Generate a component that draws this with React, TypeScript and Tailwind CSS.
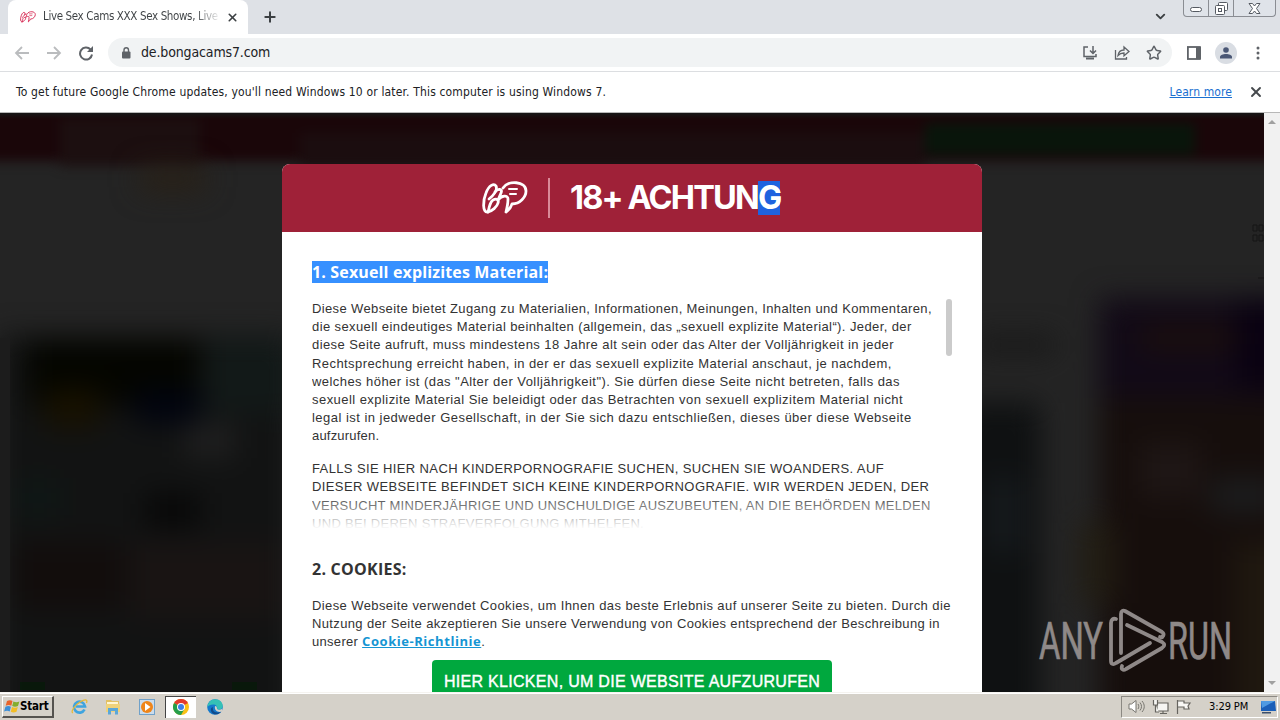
import { ChevronDown, Plus, Star, X } from "lucide-react";

const introLines = [
  { text: "Diese Webseite bietet Zugang zu Materialien, Informationen, Meinungen, Inhalten und Kommentaren,", cls: "tracking-[0.37px]" },
  { text: "die sexuell eindeutiges Material beinhalten (allgemein, das „sexuell explizite Material“). Jeder, der", cls: "tracking-[0.4px]" },
  { text: "diese Seite aufruft, muss mindestens 18 Jahre alt sein oder das Alter der Volljährigkeit in jeder", cls: "tracking-[0.42px]" },
  { text: "Rechtsprechung erreicht haben, in der er das sexuell explizite Material anschaut, je nachdem,", cls: "tracking-[0.43px]" },
  { text: "welches höher ist (das \"Alter der Volljährigkeit\"). Sie dürfen diese Seite nicht betreten, falls das", cls: "tracking-[0.44px]" },
  { text: "sexuell explizite Material Sie beleidigt oder das Betrachten von sexuell explizitem Material nicht", cls: "tracking-[0.45px]" },
  { text: "legal ist in jedweder Gesellschaft, in der Sie sich dazu entschließen, dieses über diese Webseite", cls: "tracking-[0.47px]" },
  { text: "aufzurufen.", cls: "tracking-[0.2px]" },
];

const warningLines = [
  { text: "FALLS SIE HIER NACH KINDERPORNOGRAFIE SUCHEN, SUCHEN SIE WOANDERS. AUF", cls: "tracking-[0.38px]" },
  { text: "DIESER WEBSEITE BEFINDET SICH KEINE KINDERPORNOGRAFIE. WIR WERDEN JEDEN, DER", cls: "tracking-[0.39px]" },
  { text: "VERSUCHT MINDERJÄHRIGE UND UNSCHULDIGE AUSZUBEUTEN, AN DIE BEHÖRDEN MELDEN", cls: "tracking-[0.29px]" },
  { text: "UND BEI DEREN STRAFVERFOLGUNG MITHELFEN.", cls: "tracking-[0.3px]" },
];

function BrandMark({ className }: { className: string }) {
  return (
    <svg className={className} viewBox="0 0 46 34" fill="none" stroke="currentColor" strokeWidth="2.8" strokeLinecap="round" strokeLinejoin="round">
      <path d="M6 31C0 32 1 19 4 12 7 4 12 2 14 5c2 4-3 10-7 13" />
      <path d="M6 31c2-6 1-9 5-12 4-2 6 0 5 3-1 4-6 8-10 9" />
      <path d="M13 11c3-4 8-3 6 1l-3 7c4-5 10-5 10-1 0 3-1 9-2 13 3-2 5-5 6-8 8 0 14-7 14-13C44 0 26-1 21 7" />
      <path d="M27 8h8M28 13h6" strokeWidth="2" />
    </svg>
  );
}

function TabStrip() {
  return (
    <div className="flex h-[34px] items-stretch bg-[#dee1e6]">
      <div className="ml-2 flex w-[240px] items-center rounded-t-lg bg-white pl-3">
        <BrandMark className="h-3 w-4 text-[#d8325a]" />
        <div className="ml-[7px] w-[178px] overflow-hidden bg-gradient-to-r from-[#3c4043] from-85% to-[#3c404300] bg-clip-text text-[11.5px] whitespace-nowrap text-transparent tracking-[-0.36px]">
          Live Sex Cams XXX Sex Shows, Live
        </div>
        <X className="ml-[5px] size-[13px] text-[#3c4043]" strokeWidth={3} />
      </div>
      <Plus className="mt-[9px] ml-[14px] size-4 text-[#3c4043]" strokeWidth={3} />
      <div className="ml-auto flex">
        <ChevronDown className="mt-[9px] mr-[15px] size-[15px] text-[#3c4043]" strokeWidth={3} />
        <div className="mr-1 flex h-[17px] w-[93px] rounded-b border border-t-0 border-[#8a8d93] bg-[#dfe3e9]">
          <div className="flex w-[25px] items-center justify-center border-r border-[#8a8d93]">
            <div className="mt-[3px] h-[5px] w-3 rounded-sm border border-[#555a62] bg-white" />
          </div>
          <div className="flex w-[25px] items-center justify-center border-r border-[#8a8d93]">
            <svg className="size-[13px]" viewBox="0 0 13 13" fill="white" stroke="#555a62">
              <rect x="3.500" y="0.500" width="9" height="8" rx="1" />
              <rect x="0.500" y="3.500" width="9" height="9" rx="1" />
              <rect x="3.500" y="6.500" width="3" height="3" />
            </svg>
          </div>
          <div className="flex flex-1 items-center justify-center">
            <svg className="h-[11px] w-[13px]" viewBox="0 0 13 11" fill="white" stroke="#555a62" strokeLinejoin="round">
              <path d="M1 .5h3.500l2 2.500 2-2.500H12L8.500 5.500 12 10.500H8.500l-2-2.500-2 2.500H1l3.500-5z" />
            </svg>
          </div>
        </div>
      </div>
    </div>
  );
}

function Toolbar() {
  return (
    <div className="flex h-[38px] items-center border-b border-[#dcdee1] bg-white">
      <svg className="ml-[14px] h-4 w-[84px]" viewBox="0 0 84 16" fill="none" strokeWidth="1.8">
        <path d="M15 8H2M8 2L2 8l6 6" stroke="#babcbe" />
        <path d="M33 8h13M40 2l6 6-6 6" stroke="#babcbe" />
        <path d="M76.500 4.500A6 6 0 1 0 78 9.500" stroke="#5f6368" strokeWidth="2" />
        <path d="M79 1v6h-6z" fill="#5f6368" />
      </svg>
      <div className="ml-[10px] flex h-[29px] w-[1064px] items-center rounded-full bg-[#f1f3f4] pr-[10px] pl-[13px]">
        <svg className="size-3" viewBox="0 0 12 12" fill="#5f6368">
          <rect x="1" y="4.500" width="8.500" height="7" rx="1" />
          <path d="M3 5V3a2.250 2.250 0 0 1 4.500 0v2" fill="none" stroke="#5f6368" strokeWidth="1.400" />
        </svg>
        <span className="ml-2 text-[14px] tracking-[-0.14px] text-[#202124]">de.bongacams7.com</span>
        <div className="ml-auto flex items-center gap-4 text-[#5f6368]">
          <svg className="size-4" viewBox="0 0 16 16" fill="none" stroke="currentColor" strokeWidth="1.5">
            <path d="M6 2H2v9.500h12V9M11 1v7M8 5.500l3 3 3-3" />
            <path d="M4 13.500h8" strokeWidth="2" />
          </svg>
          <svg className="size-4" viewBox="0 0 16 16" fill="none" stroke="currentColor" strokeWidth="1.3">
            <path d="M1.500 5v9h11v-2M4 10.500C4.500 7 7 5 10 5V2l5 4.500-5 4.300V8C7.500 8 5.500 8.800 4 10.500z" />
          </svg>
          <Star className="size-4" strokeWidth={2.2} />
        </div>
      </div>
      <svg className="ml-[15px] size-[14px]" viewBox="0 0 14 14">
        <rect x="0.900" y="1" width="12" height="12" fill="none" stroke="#5f6368" strokeWidth="1.800" />
        <rect x="9" y="1" width="5" height="12" fill="#5f6368" />
      </svg>
      <div className="ml-[14px] flex size-[22px] items-center justify-center rounded-full bg-[#d9dde3]">
        <svg className="size-3" viewBox="0 0 12 12" fill="#4a5775">
          <circle cx="6" cy="3" r="2.800" />
          <path d="M0 11.500V10c0-2 3-3 6-3s6 1 6 3v1.500z" />
        </svg>
      </div>
      <svg className="ml-[19px] h-[14px] w-1" viewBox="0 0 4 14" fill="#5f6368">
        <circle cx="2" cy="2" r="1.500" />
        <circle cx="2" cy="7" r="1.500" />
        <circle cx="2" cy="12" r="1.500" />
      </svg>
    </div>
  );
}

function InfoBar() {
  return (
    <div className="flex h-[41px] items-center border-b border-[#b8b8b8] bg-white pr-4 pl-4 text-[12px] text-[#202124]">
      <span className="tracking-[0.16px] whitespace-nowrap">
        To get future Google Chrome updates, you'll need Windows 10 or later. This computer is using Windows 7.
      </span>
      <span className="ml-auto tracking-[0.1px] text-[#1a6fd0] underline">Learn more</span>
      <X className="ml-4 size-4 text-[#45494d]" strokeWidth={2.8} />
    </div>
  );
}

// Dimmed, blurred site behind the age gate
function Backdrop() {
  return (
    <svg className="absolute inset-0 h-full w-full" viewBox="0 0 1264 579" preserveAspectRatio="none">
      <defs>
        <filter id="soft" filterUnits="userSpaceOnUse" x="-60" y="-60" width="1400" height="720" colorInterpolationFilters="sRGB">
          <feGaussianBlur stdDeviation="14" />
        </filter>
        <filter id="edge" filterUnits="userSpaceOnUse" x="-60" y="-60" width="1400" height="180" colorInterpolationFilters="sRGB">
          <feGaussianBlur stdDeviation="6" />
        </filter>
        <linearGradient id="topshade" x1="0" y1="0" x2="0" y2="1">
          <stop offset="0" stopColor="#161616" />
          <stop offset="1" stopColor="#161616" stopOpacity="0" />
        </linearGradient>
      </defs>
      <rect width="1264" height="579" fill="#242424" />
      <g filter="url(#edge)">
        <rect x="-50" y="-50" width="1364" height="98" fill="#1a0609" />
        <rect x="60" y="5" width="140" height="48" fill="#1c0f10" />
        <rect x="300" y="20" width="625" height="35" fill="#1b0d0f" />
        <rect x="925" y="10" width="270" height="32" fill="#09150b" />
      </g>
      <g filter="url(#soft)">
        <rect x="140" y="55" width="65" height="22" fill="#292015" />
        <rect x="0" y="222" width="290" height="400" fill="#121313" />
        <rect x="28" y="228" width="170" height="65" fill="#040500" />
        <rect x="45" y="275" width="55" height="40" fill="#171100" />
        <rect x="135" y="275" width="65" height="35" fill="#01040f" />
        <rect x="205" y="225" width="90" height="75" fill="#121918" />
        <rect x="185" y="310" width="50" height="35" fill="#1f1f1f" />
        <rect x="15" y="365" width="45" height="40" fill="#0f1715" />
        <rect x="145" y="380" width="55" height="35" fill="#080808" />
        <rect x="15" y="430" width="110" height="65" fill="#120d0c" />
        <rect x="130" y="430" width="150" height="75" fill="#191413" />
        <rect x="975" y="223" width="80" height="18" fill="#181818" />
        <rect x="960" y="290" width="80" height="330" fill="#0f1112" />
        <rect x="985" y="365" width="38" height="75" fill="#15191c" />
        <rect x="1100" y="185" width="220" height="440" fill="#160e0c" />
        <rect x="1100" y="185" width="200" height="100" fill="#120a17" />
        <rect x="1142" y="215" width="100" height="20" fill="#1c0f0b" />
        <rect x="1235" y="185" width="70" height="90" fill="#0a0212" />
        <rect x="1140" y="330" width="60" height="55" fill="#1e1615" />
        <rect x="1210" y="365" width="70" height="35" fill="#1b1c1d" />
        <rect x="1080" y="410" width="35" height="80" fill="#221d13" />
        <rect x="1235" y="430" width="70" height="180" fill="#1f180f" />
      </g>
      <rect y="225" width="10" height="354" fill="#1c1c1c" />
      <path d="M20 569h25v8H20zM232 569h25v8h-25z" fill="#051b09" opacity="0.7" />
      <path d="M1253 112h4v6h-4zm6 0h4v6h-4zm-6 10h4v6h-4zm6 0h4v6h-4zM1258 165h6" fill="none" stroke="#151515" />
      <rect width="1264" height="6" fill="url(#topshade)" />
    </svg>
  );
}

function Watermark() {
  return (
    <svg className="absolute right-[30px] bottom-[17px] h-[70px] w-[200px]" viewBox="0 0 200 70" fill="#8f8988" stroke="#8f8988">
      <g fontFamily="Roboto, sans-serif" fontSize="51" fontWeight="400" strokeWidth="0.700">
        <text x="5" y="54" textLength="64" lengthAdjust="spacingAndGlyphs">ANY</text>
        <text x="134" y="54" textLength="64" lengthAdjust="spacingAndGlyphs">RUN</text>
      </g>
      <g fill="none" strokeWidth="3.800" strokeLinejoin="round" strokeLinecap="round">
        <path d="M82 14c-3-1-5 1-5 4v38c0 3 2 4 5 2l34-20" />
        <path d="M87 48V9c0-3 2-4 4-3l37 21c3 2 1 6-2 5" />
        <path d="M93 20l35 17c3 2 3 4 0 6L92 64c-3 2-5 0-4-3" />
      </g>
    </svg>
  );
}

function AgeGate() {
  return (
    <div className="relative mx-auto mt-[51px] w-[700px] overflow-hidden rounded-t-lg bg-white">
      <div className="flex h-[68px] items-center bg-[#9f2138] pl-[200px] text-white">
        <BrandMark className="h-[34px] w-[46px]" />
        <div className="ml-5 h-10 w-[2px] bg-[#d98a98]" />
        <h1 className="ml-5 flex font-['Inter',sans-serif] text-[32.5px] leading-[34px] font-bold tracking-[-1.85px] whitespace-pre">
          18+ ACHTUN<span className="bg-[#1f62df]">G</span>
        </h1>
      </div>

      <div className="h-[460px] px-[30px] pt-[29px] font-['Liberation_Sans',sans-serif] text-[13px] leading-[18.2px] text-[#333]">
        <h2 className="w-fit bg-[#3690ff] font-['Open_Sans',sans-serif] text-[16px] leading-[22px] font-bold tracking-[0.15px] whitespace-nowrap text-white">
          1. Sexuell explizites Material:
        </h2>

        <div className="relative mt-4 h-[230px] overflow-hidden pt-px whitespace-nowrap">
          {introLines.map((line) => (
            <p key={line.text} className={line.cls}>{line.text}</p>
          ))}
          <div className="mt-[14.5px]">
            {warningLines.map((line) => (
              <p key={line.text} className={line.cls}>{line.text}</p>
            ))}
          </div>
          <div className="absolute inset-x-0 bottom-0 h-9 bg-gradient-to-b from-white/0 to-white" />
          <div className="absolute top-0 right-0 h-[57px] w-[6px] rounded-full bg-[#cbcbcb]" />
        </div>

        <h2 className="mt-[29px] font-['Open_Sans',sans-serif] text-[16px] leading-[22px] font-bold tracking-[0.25px]">2. COOKIES:</h2>
        <div className="mt-[17px] h-[55px] whitespace-nowrap">
          <p className="tracking-[0.4px]">Diese Webseite verwendet Cookies, um Ihnen das beste Erlebnis auf unserer Seite zu bieten. Durch die</p>
          <p className="tracking-[0.36px]">Nutzung der Seite akzeptieren Sie unsere Verwendung von Cookies entsprechend der Beschreibung in</p>
          <p className="tracking-[0.3px]">
            unserer <a className="font-['Open_Sans',sans-serif] leading-none font-bold tracking-[0.55px] text-[#1595d3] underline">Cookie-Richtlinie</a>.
          </p>
        </div>
        <button className="mx-auto mt-2 flex h-[45px] w-[400px] items-center justify-center rounded bg-[#00a83e] text-[16px] tracking-[0.3px] whitespace-nowrap text-white [-webkit-text-stroke:0.4px_white]">
          HIER KLICKEN, UM DIE WEBSITE AUFZURUFEN
        </button>
      </div>
    </div>
  );
}

function ScrollBar() {
  return (
    <div className="flex w-4 flex-col items-center justify-between bg-[#f1f1f1] py-[7px]">
      <svg className="h-1 w-2" viewBox="0 0 8 4" fill="#a0a0a0"><path d="M0 4l4-4 4 4z" /></svg>
      <svg className="h-1 w-2" viewBox="0 0 8 4" fill="#a0a0a0"><path d="M0 0l4 4 4-4z" /></svg>
    </div>
  );
}

function Taskbar() {
  return (
    <div className="flex h-7 items-center border-t border-[#f5f3ef] bg-[#d5d1c9] shadow-[inset_0_1px_0_#fff]">
      <button className="mt-px ml-[2px] flex h-[22px] w-[52px] items-center border-t border-r-2 border-b-2 border-l border-t-white border-r-[#55534f] border-b-[#55534f] border-l-white pl-px">
        <svg className="h-[15px] w-4" viewBox="0 0 16 15">
          <path d="M3 2c2-1 4-1 5.500 0L7.300 6.700c-1.600-1-3.500-1-5.600 0z" fill="#e8642c" />
          <path d="M9.400 2.400c2 1 4 1 6 0L14 7c-2 1-4 1-5.800 0z" fill="#83ad2e" />
          <path d="M1.400 7.700c2-1 4-1 5.500 0L5.700 12.400c-1.600-1-3.600-1-5.600 0z" fill="#3d8fd8" />
          <path d="M8 8c2 1 4 1 5.800 0l-1.300 4.700c-2 1-4 1-5.700 0z" fill="#f3bd26" />
        </svg>
        <span className="text-[11.5px] font-bold tracking-[-0.2px] text-black">Start</span>
      </button>

      <div className="ml-[17px] flex items-center">
        {/* Internet Explorer */}
        <svg className="size-[17px]" viewBox="0 0 17 17" fill="none">
          <path d="M13.500 11.500A5.500 5.500 0 1 1 14 8.500H5" stroke="#3fa4df" strokeWidth="2.700" />
          <path d="M2 15C-1 14 4 7 9 4s8-3 6.500 1" stroke="#e7b936" strokeWidth="1.300" />
        </svg>
        {/* Explorer folder */}
        <svg className="ml-[17px] size-4" viewBox="0 0 16 16">
          <path d="M1 1h5l1 1h7v10H1z" fill="#e2c063" />
          <path d="M2 3h11v2H2z" fill="#fff6d2" />
          <path d="M1 5h14v8H1z" fill="#efd27a" />
          <path d="M3 15.500V9h10v6.500h-3V12H6v3.500z" fill="#5ba7d8" />
        </svg>
        {/* Media Player */}
        <svg className="ml-[18px] size-4" viewBox="0 0 16 16">
          <rect x="0.500" y="0.500" width="15" height="15" fill="#cbdcec" stroke="#70a1c9" />
          <circle cx="8" cy="8" r="6" fill="#ef8519" />
          <path d="M6 4l5.500 4L6 12z" fill="white" />
        </svg>
        <div className="ml-[10px] flex h-[22px] w-[31px] items-center justify-center border-t border-l border-t-[#444] border-l-[#444] bg-white">
          {/* Chrome */}
          <svg className="size-4" viewBox="0 0 16 16">
            <circle cx="8" cy="8" r="8" fill="#fbc116" />
            <path d="M8 8L1.070 4A8 8 0 0 1 14.930 4z" fill="#e33b2e" />
            <path d="M8 8L1.070 4A8 8 0 0 0 8 16l3.500-6z" fill="#269e4b" />
            <circle cx="8" cy="8" r="4" fill="white" />
            <circle cx="8" cy="8" r="3" fill="#3d7fe8" />
          </svg>
        </div>
        {/* Edge */}
        <svg className="ml-[11px] size-4" viewBox="0 0 16 16">
          <circle cx="8" cy="8" r="7.800" fill="#1479cc" />
          <path d="M.3 8C1 3 4 .2 8 .2c5 0 8 3.500 7.700 7C15.500 10 13 11 10 10.500c1-3-1-5-4-5C3.500 5.500 1.500 6.500.3 8z" fill="#35c1b6" />
          <path d="M6 8c-1 4 2 6.500 8 5-3 3.500-9 3-10-1-.5-2 0-3.500 2-4z" fill="#114a8b" />
          <path d="M8 7c3 0 1 3 3 3.500s4 0 4-1v3c-4 1.500-8-1-7-5.500z" fill="#d5d1c9" />
        </svg>
      </div>

      <div className="mr-[2px] ml-auto flex h-[22px] w-[157px] items-center border border-t-[#8c8983] border-r-white border-b-white border-l-[#8c8983] pl-[6px]">
        <svg className="h-[15px] w-[17px]" viewBox="0 0 17 15" fill="white" stroke="#77756f">
          <path d="M1 5h2.500L8 1.500v12L3.500 10H1z" />
          <path d="M10 5c1 1.500 1 3.500 0 5M12 3.500c2 2.500 2 5.500 0 8M14 2c3 3.500 3 7.500 0 11" fill="none" />
        </svg>
        <svg className="ml-[7px] h-4 w-[17px]" viewBox="0 0 17 16" fill="#f6f5f2" stroke="#66645f" strokeWidth="1.200">
          <path d="M5 4h11v8H5zM8 14.500h7M11 12v2" />
          <path d="M1.500 1v5h4V1M3.500 6v7H7" />
        </svg>
        <svg className="ml-[7px] h-4 w-4" viewBox="0 0 16 16" fill="#f9f8f5" stroke="#66645f" strokeWidth="1.200">
          <path d="M1.500 15V1M2 2h6v2h6l-2 3 1 3H8V8H2" />
        </svg>
        <span className="mt-[2px] ml-[17px] text-[11px] tracking-[-0.1px] whitespace-nowrap text-black">3:29 PM</span>
        <svg className="ml-auto h-[14px] w-[17px]" viewBox="0 0 17 14">
          <path d="M1 1h14l1 10H1z" fill="#1b5fb8" />
          <path d="M1 1h14L2 8z" fill="#4f9ae2" />
          <path d="M2 12h9v1.500H2z" fill="#3b4f6b" />
        </svg>
      </div>
    </div>
  );
}

export default function App() {
  return (
    <div className="flex h-[720px] w-[1280px] flex-col overflow-hidden font-['DejaVu_Sans_Condensed','DejaVu_Sans',sans-serif]">
      <TabStrip />
      <Toolbar />
      <InfoBar />
      <div className="flex h-[579px]">
        <main className="relative w-[1264px] overflow-hidden">
          <Backdrop />
          <AgeGate />
          <Watermark />
        </main>
        <ScrollBar />
      </div>
      <Taskbar />
    </div>
  );
}
